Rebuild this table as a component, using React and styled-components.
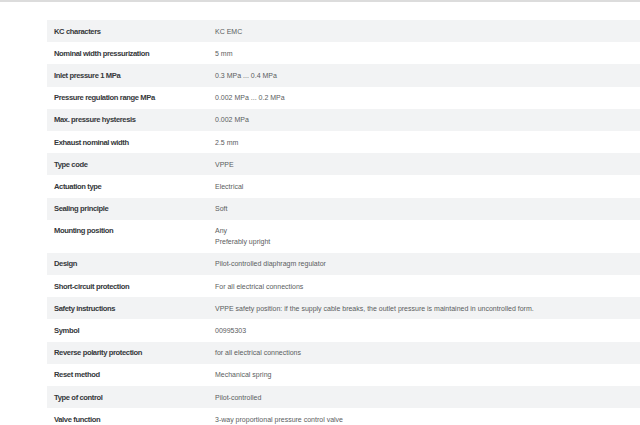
import React from "react";
import styled, { createGlobalStyle } from "styled-components";

const Global = createGlobalStyle`
  html, body { margin: 0; padding: 0; background: #ffffff; }
  body { font-family: "Liberation Sans", Arial, sans-serif; }
`;

const Page = styled.div`
  width: 640px;
  height: 425px;
  overflow: hidden;
  border-top: 2px solid #dcdcdc;
  box-sizing: border-box;
  padding: 18px 0 0 47px;
`;

const Table = styled.div`
  display: flex;
  flex-direction: column;
  width: 620px;
`;

const Row = styled.div`
  display: grid;
  grid-template-columns: 168px 1fr;
  background: ${(p) => (p.$shade ? "#f2f3f4" : "#ffffff")};
  padding: 5.6px 0;
`;

const Label = styled.div`
  padding-left: 7px;
  font-weight: 700;
  font-size: 7.6px;
  letter-spacing: -0.38px;
  line-height: 11px;
  color: #35383b;
`;

const Value = styled.div`
  font-size: 7px;
  line-height: 11px;
  color: #5a5d60;
  white-space: nowrap;
`;

const Line = styled.div``;

const rows = [
  ["KC characters", ["KC EMC"]],
  ["Nominal width pressurization", ["5 mm"]],
  ["Inlet pressure 1 MPa", ["0.3 MPa ... 0.4 MPa"]],
  ["Pressure regulation range MPa", ["0.002 MPa ... 0.2 MPa"]],
  ["Max. pressure hysteresis", ["0.002 MPa"]],
  ["Exhaust nominal width", ["2.5 mm"]],
  ["Type code", ["VPPE"]],
  ["Actuation type", ["Electrical"]],
  ["Sealing principle", ["Soft"]],
  ["Mounting position", ["Any", "Preferably upright"]],
  ["Design", ["Pilot-controlled diaphragm regulator"]],
  ["Short-circuit protection", ["For all electrical connections"]],
  [
    "Safety instructions",
    [
      "VPPE safety position: if the supply cable breaks, the outlet pressure is maintained in uncontrolled form.",
    ],
  ],
  ["Symbol", ["00995303"]],
  ["Reverse polarity protection", ["for all electrical connections"]],
  ["Reset method", ["Mechanical spring"]],
  ["Type of control", ["Pilot-controlled"]],
  ["Valve function", ["3-way proportional pressure control valve"]],
];

export default function App() {
  return (
    <>
      <Global />
      <Page>
        <Table>
          {rows.map(([label, values], i) => (
            <Row key={label} $shade={i % 2 === 0}>
              <Label>{label}</Label>
              <Value>
                {values.map((v) => (
                  <Line key={v}>{v}</Line>
                ))}
              </Value>
            </Row>
          ))}
        </Table>
      </Page>
    </>
  );
}
